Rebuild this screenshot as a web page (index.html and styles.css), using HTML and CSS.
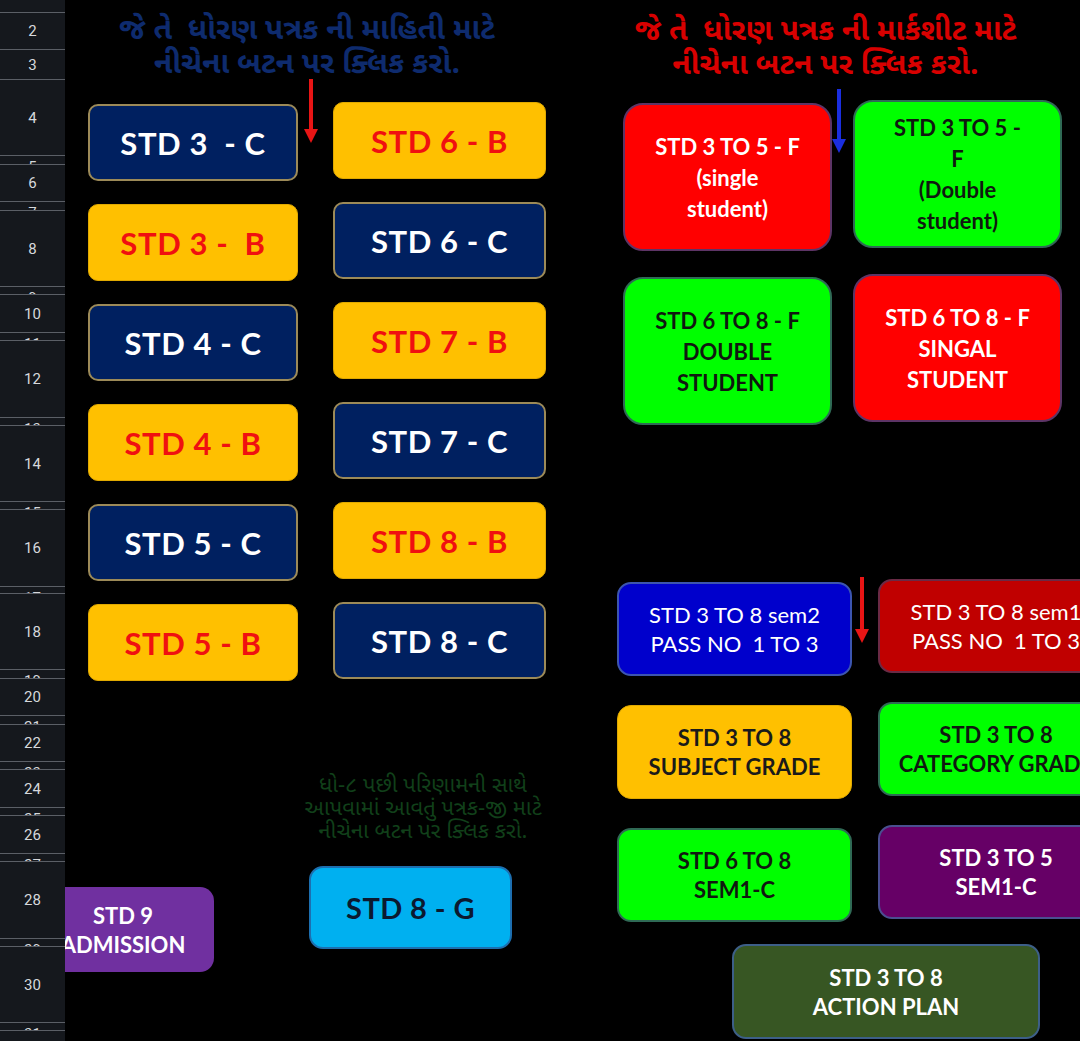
FILE: index.html
```html
<!DOCTYPE html>
<html lang="gu">
<head>
    <meta charset="UTF-8">
    <meta name="viewport" content="width=device-width, initial-scale=1.0">
    <title>પત્રક</title>
    <link rel="stylesheet" href="styles.css">
</head>
<body>
    <div class="sheet">
        <div class="row-head">
            <div class="rn"></div>
            <div class="rn">2</div>
            <div class="rn">3</div>
            <div class="rn">4</div>
            <div class="rn cut">5</div>
            <div class="rn">6</div>
            <div class="rn cut">7</div>
            <div class="rn">8</div>
            <div class="rn cut">9</div>
            <div class="rn">10</div>
            <div class="rn cut">11</div>
            <div class="rn">12</div>
            <div class="rn cut">13</div>
            <div class="rn">14</div>
            <div class="rn cut">15</div>
            <div class="rn">16</div>
            <div class="rn cut">17</div>
            <div class="rn">18</div>
            <div class="rn cut">19</div>
            <div class="rn">20</div>
            <div class="rn cut">21</div>
            <div class="rn">22</div>
            <div class="rn cut">23</div>
            <div class="rn">24</div>
            <div class="rn cut">25</div>
            <div class="rn">26</div>
            <div class="rn cut">27</div>
            <div class="rn">28</div>
            <div class="rn cut">29</div>
            <div class="rn">30</div>
            <div class="rn cut">31</div>
            <div class="rn"></div>
        </div>

        <div class="canvas">
            <!-- પત્રક ની માહિતી -->
            <div class="group info">
                <div class="title title-blue">જે તે&nbsp; ધોરણ પત્રક ની માહિતી માટે<br>નીચેના બટન પર ક્લિક કરો.</div>
                <div class="info-grid">
                    <div class="col col-left">
                        <a class="btn big navy">STD 3&nbsp; - C</a>
                        <a class="btn big yellow">STD 3 -&nbsp; B</a>
                        <a class="btn big navy">STD 4 - C</a>
                        <a class="btn big yellow">STD 4 - B</a>
                        <a class="btn big navy">STD 5 - C</a>
                        <a class="btn big yellow">STD 5 - B</a>
                    </div>
                    <div class="col col-right">
                        <a class="btn big yellow">STD 6 - B</a>
                        <a class="btn big navy">STD 6 - C</a>
                        <a class="btn big yellow">STD 7 - B</a>
                        <a class="btn big navy">STD 7 - C</a>
                        <a class="btn big yellow">STD 8 - B</a>
                        <a class="btn big navy">STD 8 - C</a>
                    </div>
                </div>
            </div>

            <!-- માર્કશીટ -->
            <div class="group marks">
                <div class="title title-red">જે તે&nbsp; ધોરણ પત્રક ની માર્કશીટ માટે<br>નીચેના બટન પર ક્લિક કરો.</div>
                <div class="marks-grid">
                    <a class="btn mid red">STD 3 TO 5 - F<br>(single<br>student)</a>
                    <a class="btn mid green up">STD 3 TO 5 -<br>F<br>(Double<br>student)</a>
                    <a class="btn mid green">STD 6 TO 8 - F<br>DOUBLE<br>STUDENT</a>
                    <a class="btn mid red up">STD 6 TO 8 - F<br>SINGAL<br>STUDENT</a>
                </div>
            </div>

            <!-- પરિણામ -->
            <div class="group results">
                <div class="results-grid">
                    <a class="btn small blue thin">STD 3 TO 8 sem2<br>PASS NO&nbsp; 1 TO 3</a>
                    <a class="btn small darkred thin up">STD 3 TO 8 sem1<br>PASS NO&nbsp; 1 TO 3</a>
                    <a class="btn small yellow dark">STD 3 TO 8<br>SUBJECT GRADE</a>
                    <a class="btn small green up">STD 3 TO 8<br>CATEGORY GRADE</a>
                    <a class="btn small green">STD 6 TO 8<br>SEM1-C</a>
                    <a class="btn small plum up">STD 3 TO 5<br>SEM1-C</a>
                </div>
                <a class="btn small olive action">STD 3 TO 8<br>ACTION PLAN</a>
            </div>

            <!-- પત્રક-જી -->
            <div class="group gform">
                <div class="note">ધો-૮ પછી પરિણામની સાથે<br>આપવામાં આવતું પત્રક-જી માટે<br>નીચેના બટન પર ક્લિક કરો.</div>
                <a class="btn cyan">STD 8 - G</a>
            </div>

            <a class="btn small violet admission">STD 9<br>ADMISSION</a>

            <svg class="arrow arrow-a" width="14" height="64" viewBox="0 0 14 64">
                <rect x="5" y="0" width="4" height="52" fill="#e81515"/>
                <polygon points="0,50 14,50 7,64" fill="#e81515"/>
            </svg>
            <svg class="arrow arrow-b" width="14" height="64" viewBox="0 0 14 64">
                <rect x="5" y="0" width="4" height="52" fill="#1a2ee0"/>
                <polygon points="0,50 14,50 7,64" fill="#1a2ee0"/>
            </svg>
            <svg class="arrow arrow-c" width="14" height="66" viewBox="0 0 14 66">
                <rect x="5" y="0" width="4" height="54" fill="#e81515"/>
                <polygon points="0,52 14,52 7,66" fill="#e81515"/>
            </svg>
        </div>
    </div>
</body>
</html>
```

FILE: styles.css
```css
html, body {
    margin: 0;
    padding: 0;
    background-color: #000;
}

body {
    width: 1080px;
    height: 1041px;
    overflow: hidden;
}

.sheet {
    display: flex;
    height: 100%;
}

/* row numbers on the left */
.row-head {
    width: 65px;
    flex-shrink: 0;
    background-color: #15181d;
    display: grid;
    grid-template-rows: 13px 37px 30px 76px 9px 37px 9px 76px 8px 38px 8px 77px 8px 76px 8px 77px 7px 76px 9px 37px 9px 37px 8px 38px 8px 38px 8px 77px 8px 76px 8px 1fr;
    position: relative;
    z-index: 2;
}

.rn {
    box-sizing: border-box;
    border-bottom: 1px solid #5b5f66;
    display: flex;
    align-items: center;
    justify-content: center;
    overflow: hidden;
    font-family: Roboto, "Liberation Sans", sans-serif;
    font-size: 15px;
    line-height: 20px;
    color: #d6d8dc;
}

.rn.cut {
    align-items: flex-start;
    padding-top: 1px;
}

.rn:last-child {
    border-bottom: none;
}

/* drawings on the sheet */
.canvas {
    flex: 1;
    position: relative;
    overflow: hidden;
    background-color: #000;
}

.group {
    position: absolute;
}

.title {
    font-family: "Noto Sans Gujarati", "Lohit Gujarati", "Noto Sans", sans-serif;
    font-weight: bold;
    font-size: 30px;
    line-height: 34px;
    text-align: center;
    white-space: nowrap;
}

.title-blue {
    color: #0e2b6e;
    padding-right: 20px;
}

.title-red {
    color: #d80000;
    padding-right: 34px;
}

.btn {
    box-sizing: border-box;
    display: flex;
    align-items: center;
    justify-content: center;
    text-align: center;
    font-family: Lato, "Open Sans", sans-serif;
    font-weight: bold;
    color: #fff;
    white-space: nowrap;
    cursor: pointer;
}

.big {
    height: 77px;
    border-radius: 10px;
    font-size: 31px;
    letter-spacing: 0.6px;
}

.mid {
    border-radius: 20px;
    font-size: 22px;
    line-height: 31px;
}

.small {
    border-radius: 14px;
    font-size: 22px;
    line-height: 29px;
}

.thin {
    font-weight: normal;
}

.navy {
    background-color: #002060;
    border: 2px solid #9c8a58;
}

.yellow {
    background-color: #ffc000;
    border: 1px solid #e0a900;
    color: #f01010;
}

.yellow.dark {
    color: #1a1a1a;
}

.red {
    background-color: #ff0000;
    border: 2px solid #5d3466;
}

.green {
    background-color: #00ff00;
    border: 2px solid #2f6a55;
    color: #101810;
}

.blue {
    background-color: #0000cc;
    border: 2px solid #3c55b0;
}

.darkred {
    background-color: #c00000;
    border: 2px solid #6a2a45;
}

.plum {
    background-color: #660066;
    border: 2px solid #4a4f90;
}

.olive {
    background-color: #375623;
    border: 2px solid #3d5f88;
}

.violet {
    background-color: #7030a0;
}

.cyan {
    background-color: #00b0f0;
    border: 2px solid #1d6fb0;
    color: #0b1930;
    height: 83px;
    width: 203px;
    border-radius: 14px;
    font-size: 29px;
    letter-spacing: 0.4px;
}

/* info block */
.info {
    left: 23px;
    top: 15px;
    width: 458px;
}

.info-grid {
    display: flex;
    gap: 35px;
    margin-top: 21px;
}

.col {
    display: flex;
    flex-direction: column;
    gap: 23px;
}

.col-left {
    width: 210px;
}

.col-right {
    width: 213px;
    margin-top: -2px;
}

/* marksheet block */
.marks {
    left: 558px;
    top: 16px;
    width: 439px;
}

.marks-grid {
    display: grid;
    grid-template-columns: 209px 209px;
    grid-template-rows: 148px 148px;
    column-gap: 21px;
    row-gap: 26px;
    margin-top: 19px;
}

.marks-grid .up,
.results-grid .up {
    margin-top: -3px;
    margin-bottom: 3px;
}

/* results block */
.results {
    left: 552px;
    top: 582px;
    width: 497px;
}

.results-grid {
    display: grid;
    grid-template-columns: 235px 236px;
    grid-auto-rows: 94px;
    column-gap: 26px;
    row-gap: 29px;
}

.action {
    width: 308px;
    height: 95px;
    margin-left: 115px;
    margin-top: 22px;
}

/* patrak-G block */
.gform {
    left: 231px;
    top: 775px;
    width: 254px;
}

.note {
    font-family: "Noto Sans Gujarati", "Lohit Gujarati", "Noto Sans", sans-serif;
    font-size: 22px;
    line-height: 23px;
    color: #11401a;
    text-align: center;
    white-space: nowrap;
}

.gform .cyan {
    margin-left: 13px;
    margin-top: 22px;
}

.admission {
    position: absolute;
    left: -33px;
    top: 887px;
    width: 182px;
    height: 85px;
}

.arrow {
    position: absolute;
}

.arrow-a {
    left: 239px;
    top: 79px;
}

.arrow-b {
    left: 767px;
    top: 89px;
}

.arrow-c {
    left: 790px;
    top: 577px;
}
```
